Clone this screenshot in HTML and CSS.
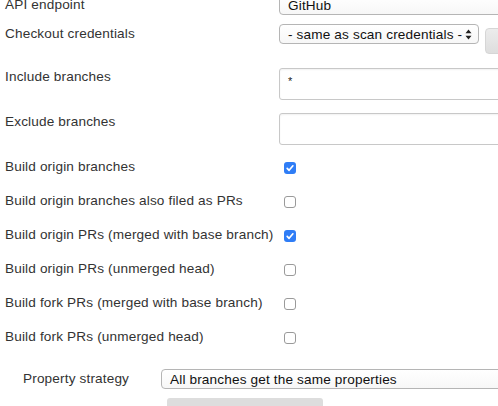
FILE: index.html
```html
<!DOCTYPE html>
<html>
<head>
<meta charset="utf-8">
<link rel="stylesheet" href="styles.css">
</head>
<body>
<div class="form">
  <div class="row row-select">
    <div class="label">API endpoint</div>
    <div class="control">
      <div class="select wide"><span class="select-text">GitHub</span></div>
    </div>
  </div>
  <div class="row row-cred">
    <div class="label">Checkout credentials</div>
    <div class="control cred">
      <div class="select narrow">
        <span class="select-text">- same as scan credentials -</span>
        <svg class="arrows" width="7" height="11" viewBox="0 0 7 11"><path d="M3.5 0.5 L6.5 4.3 L0.5 4.3 Z M3.5 10.5 L6.5 6.7 L0.5 6.7 Z" fill="#222"/></svg>
      </div>
      <div class="add-btn"></div>
    </div>
  </div>
  <div class="row row-input first-input">
    <div class="label">Include branches</div>
    <div class="control"><div class="input">*</div></div>
  </div>
  <div class="row row-input">
    <div class="label">Exclude branches</div>
    <div class="control"><div class="input"></div></div>
  </div>
  <div class="checks">
    <div class="row row-check">
      <div class="label">Build origin branches</div>
      <div class="control"><span class="box checked"><svg width="12" height="12" viewBox="0 0 12 12"><path d="M3.2 6.3 L5.1 8.3 L8.9 3.8" fill="none" stroke="#fff" stroke-width="1.7" stroke-linecap="round" stroke-linejoin="round"/></svg></span></div>
    </div>
    <div class="row row-check">
      <div class="label">Build origin branches also filed as PRs</div>
      <div class="control"><span class="box"></span></div>
    </div>
    <div class="row row-check">
      <div class="label">Build origin PRs (merged with base branch)</div>
      <div class="control"><span class="box checked"><svg width="12" height="12" viewBox="0 0 12 12"><path d="M3.2 6.3 L5.1 8.3 L8.9 3.8" fill="none" stroke="#fff" stroke-width="1.7" stroke-linecap="round" stroke-linejoin="round"/></svg></span></div>
    </div>
    <div class="row row-check">
      <div class="label">Build origin PRs (unmerged head)</div>
      <div class="control"><span class="box"></span></div>
    </div>
    <div class="row row-check">
      <div class="label">Build fork PRs (merged with base branch)</div>
      <div class="control"><span class="box"></span></div>
    </div>
    <div class="row row-check">
      <div class="label">Build fork PRs (unmerged head)</div>
      <div class="control"><span class="box"></span></div>
    </div>
  </div>
  <div class="sub">
    <div class="row row-prop">
      <div class="label sublabel">Property strategy</div>
      <div class="control"><div class="select wide"><span class="select-text">All branches get the same properties</span></div></div>
    </div>
    <div class="gray-block"></div>
  </div>
</div>
</body>
</html>
```

FILE: styles.css
```css
html, body {
  margin: 0;
  padding: 0;
  background: #fff;
  overflow: hidden;
}
body {
  width: 498px;
  height: 406px;
  font-family: "Liberation Sans", Arial, Helvetica, sans-serif;
  font-size: 13.6px;
  letter-spacing: 0.15px;
  color: #333;
}
.form {
  margin-top: -5px;
  display: flex;
  flex-direction: column;
}
.row {
  display: flex;
  align-items: center;
}
.label {
  width: 274px;
  flex: none;
  padding-left: 5px;
  line-height: 16px;
  white-space: nowrap;
}
.control {
  flex: 1;
  display: flex;
  align-items: center;
  min-width: 0;
}
.row-select { height: 20px; }
.row-cred {
  margin-top: 9px;
  align-items: flex-start;
}
.row-cred .label { padding-top: 2px; }
.cred { align-items: flex-start; }
.select {
  box-sizing: border-box;
  height: 20px;
  border: 1px solid #b5b5b5;
  border-radius: 4px;
  background: linear-gradient(#ffffff, #f7f7f7);
  display: flex;
  align-items: center;
  padding-left: 8px;
  color: #111;
  white-space: nowrap;
  flex: none;
}
.select.wide { width: 400px; }
.select.narrow {
  width: 200px;
  justify-content: space-between;
  padding-right: 6px;
}
.arrows { flex: none; }
.add-btn {
  margin-left: 6px;
  margin-top: 4px;
  width: 30px;
  height: 26px;
  box-sizing: border-box;
  border: 1px solid #d6d6d6;
  border-radius: 4px;
  background: linear-gradient(#ececec, #dedede);
  flex: none;
}
.row-input {
  align-items: flex-start;
  margin-top: 14px;
}
.row-input + .row-input { margin-top: 13px; }
.row-input .label { padding-top: 1px; }
.input {
  box-sizing: border-box;
  width: 400px;
  height: 32px;
  border: 1px solid #c8c8c8;
  border-radius: 3px;
  box-shadow: inset 0 1px 2px rgba(0,0,0,0.06);
  padding: 6px 0 0 8px;
  font-size: 11px;
  color: #222;
  flex: none;
}
.checks {
  margin-top: 5px;
  display: flex;
  flex-direction: column;
}
.row-check { height: 34px; }
.row-check .control { padding-left: 5px; padding-top: 2px; }
.box {
  box-sizing: border-box;
  width: 12px;
  height: 12px;
  border: 1px solid #9a9a9a;
  border-radius: 3px;
  background: #fff;
  display: flex;
}
.box.checked {
  border: none;
  background: #2f7df6;
}
.sub {
  display: flex;
  flex-direction: column;
  margin-top: 15px;
}
.row-prop { height: 20px; }
.sublabel {
  width: 138px;
  padding-left: 23px;
}
.gray-block {
  margin-top: 9px;
  margin-left: 167px;
  width: 156px;
  height: 20px;
  background: #dddddd;
  border-radius: 3px 3px 0 0;
}
```
